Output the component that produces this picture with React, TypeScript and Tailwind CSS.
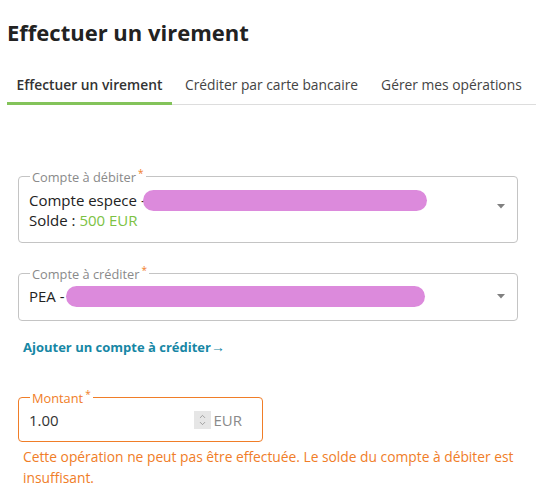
import { ChevronDown, ChevronUp } from 'lucide-react';

const font = { fontFamily: '"Open Sans", "Noto Sans", sans-serif' };

function Caret() {
  return (
    <svg width="8" height="5" viewBox="0 0 8 5" className="shrink-0">
      <path d="M0 0h8L4 4.5z" fill="#808080" />
    </svg>
  );
}

function Redacted({ className }: { className: string }) {
  return <span className={`inline-block h-[21px] rounded-full bg-[#dc8adc] ${className}`} />;
}

function Legend({ label, orange }: { label: string; orange?: boolean }) {
  return (
    <legend
      className={`ml-[1px] px-[2px] text-[12.8px] leading-[12px] ${orange ? 'text-[#f07d28]' : 'text-[#8a8a8a]'}`}
    >
      {label}
      <sup className="ml-[2px] text-[10px] text-[#f07d28]">*</sup>
    </legend>
  );
}

export default function App() {
  return (
    <div className="w-[543px] h-[500px] bg-white text-[#222]" style={font}>
      <h1 className="px-[7px] pt-[17px] text-[22px] font-bold leading-[30px] text-[#222]">
        Effectuer un virement
      </h1>

      <div className="mt-[26px] mx-[7px] flex border-b border-[#dddddd] text-[13.8px]">
        <div className="w-[165px] border-b-[3px] border-[#83c35a] -mb-px pb-[6px] pt-[2px] text-center font-semibold text-[#333]">
          Effectuer un virement
        </div>
        <div className="pl-[13px] pt-[2px] pb-[6px] text-[#444]">Créditer par carte bancaire</div>
        <div className="pl-[23px] pt-[2px] pb-[6px] text-[#444]">Gérer mes opérations</div>
      </div>

      <div className="px-[18px] pt-[66px]">
        <fieldset className="h-[72px] w-[500px] rounded-[4px] border border-[#c4c4c4] pl-[10px] pr-[12px]">
          <Legend label="Compte à débiter" />
          <div className="flex items-center">
            <div className="flex-1 pt-[7px] text-[15px] leading-[19px]">
              <div className="flex items-center">
                <span>Compte espece -</span>
                <Redacted className="w-[284px] -ml-[3px]" />
              </div>
              <div>
                Solde : <span className="text-[#7cc243]">500 EUR</span>
              </div>
            </div>
            <Caret />
          </div>
        </fieldset>

        <fieldset className="mt-[25px] h-[53px] w-[500px] rounded-[4px] border border-[#c4c4c4] pl-[10px] pr-[12px]">
          <Legend label="Compte à créditer" />
          <div className="flex items-center pt-[6px]">
            <div className="flex flex-1 items-center text-[15px] leading-[20px]">
              <span>PEA -</span>
              <Redacted className="w-[359px] ml-[1px]" />
            </div>
            <Caret />
          </div>
        </fieldset>

        <a className="ml-[5px] mt-[17px] block text-[13px] font-bold leading-[18px] text-[#1787a5]">
          Ajouter un compte à créditer<span className="text-[14px]">→</span>
        </a>

        <fieldset className="mt-[36px] h-[50px] w-[245px] rounded-[4px] border border-[#f07d28] px-[10px]">
          <Legend label="Montant" orange />
          <div className="flex items-center pt-[6px] text-[15px] leading-[20px]">
            <span className="flex-1 text-[#333]">1.00</span>
            <span className="mr-[2px] flex h-[18px] w-[17px] flex-col items-center justify-center bg-[#e6e6e6] text-[#8a8a8a]">
              <ChevronUp size={9} strokeWidth={2} className="-mb-[2px]" />
              <ChevronDown size={9} strokeWidth={2} />
            </span>
            <span className="mr-[10px] text-[#8a8a8a]">EUR</span>
          </div>
        </fieldset>

        <p className="ml-[5px] mt-[4px] w-[515px] text-[13.8px] leading-[21px] text-[#f07d28]">
          Cette opération ne peut pas être effectuée. Le solde du compte à débiter est insuffisant.
        </p>
      </div>
    </div>
  );
}
